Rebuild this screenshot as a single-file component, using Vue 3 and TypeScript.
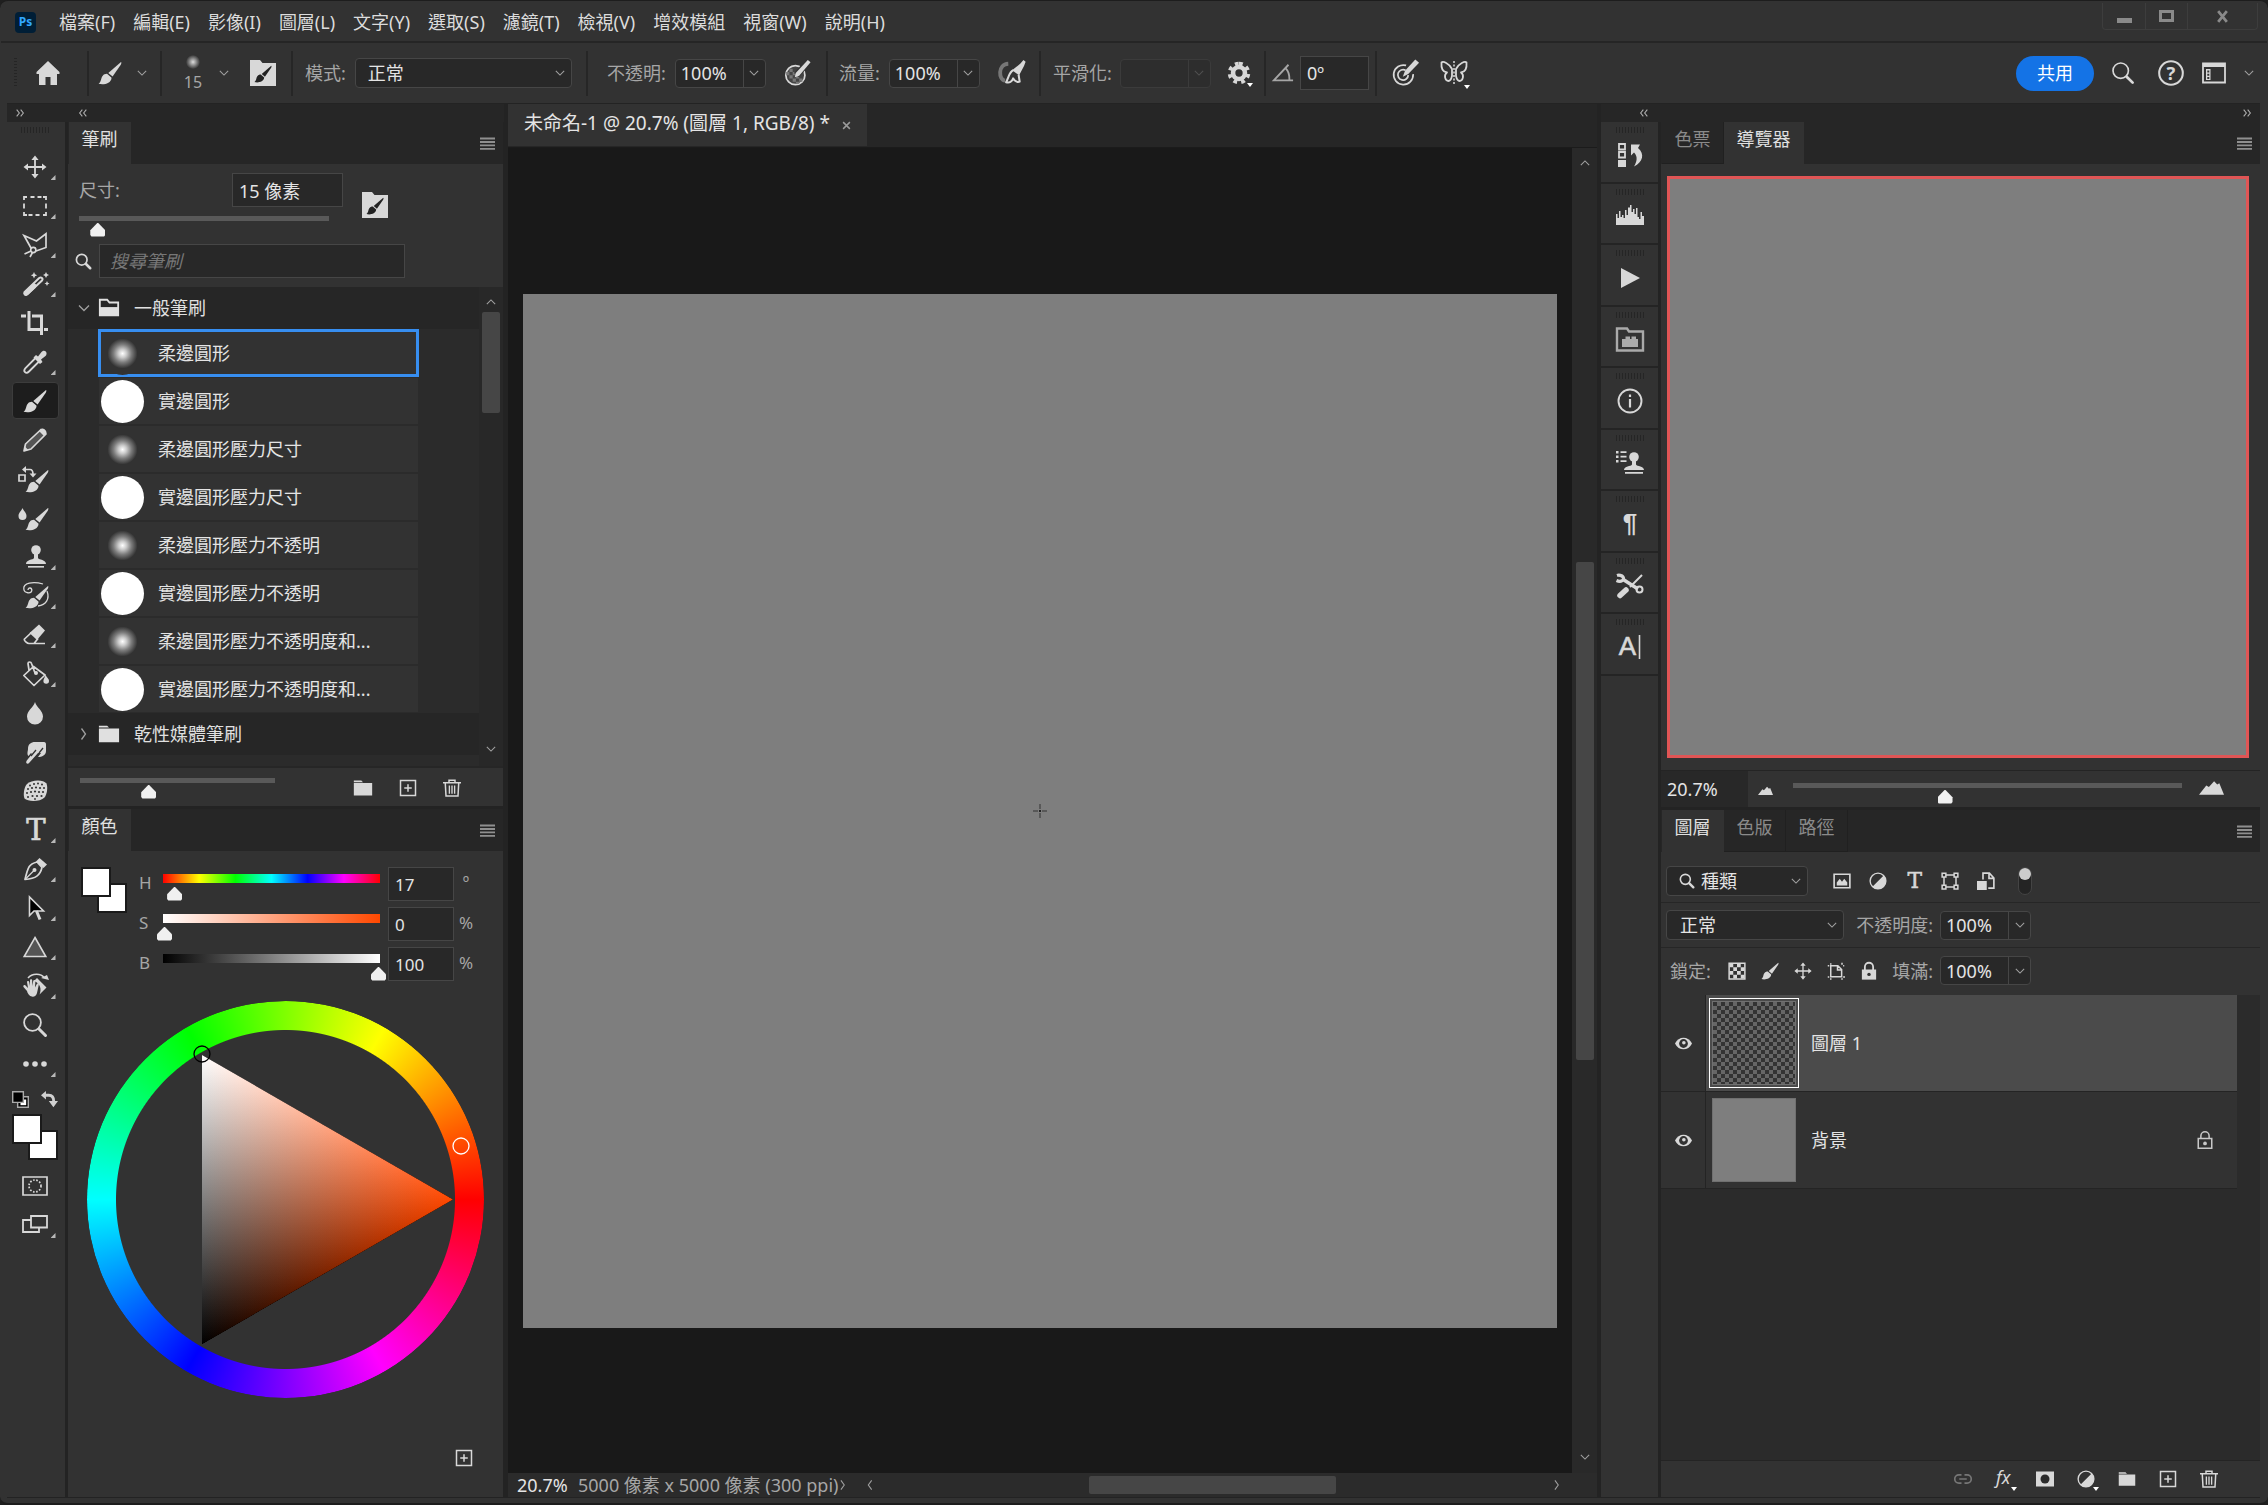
<script setup lang="ts">
import { reactive, ref } from 'vue'

interface Tool {
  name: string
  icon: string
  more?: boolean
}

const brushShape =
  '<path fill="currentColor" d="M23 1c.8.5.3 1.9-.6 3.300L14.600 15.500 10.300 12Z"/><path fill="currentColor" d="M9 12.800c-4 0-5.200 3-6 6-.5 1.900-1.300 3.200-2.400 4 4.600 1.300 12.400.2 13-6Z"/>'

const icons: Record<string, string> = {
  brush: brushShape,
  move: '<path fill="none" stroke="currentColor" stroke-width="1.800" d="M12 3v18M3 12h18"/><path fill="currentColor" d="M12 .5l3.600 4.500H8.400zM12 23.500l3.600-4.500H8.400zM.5 12l4.500-3.600v7.200zM23.500 12l-4.500-3.600v7.200z"/>',
  marquee: '<path fill="none" stroke="currentColor" stroke-width="1.800" d="M1 6V3h3M7.500 3h4M14.500 3h4M20 3h3v3M23 9.500v5M23 18v3h-3M16.500 21h-4M9.500 21h-4M4 21H1v-3M1 14.500v-5"/>',
  lasso: '<path fill="none" stroke="currentColor" stroke-width="1.700" d="M8 15L1 2.500l12.500 5.500L23 .8v13.700l-10 3.500"/><circle cx="10.300" cy="17" r="2.600" fill="none" stroke="currentColor" stroke-width="1.600"/><path fill="none" stroke="currentColor" stroke-width="1.700" d="M8 18l-6.500 3M9.500 19.500L7 24"/>',
  wand: '<path fill="none" stroke="currentColor" stroke-width="2" d="M4 22.500L19 8.500c1.500-2-.8-4-2.800-2.500L1.500 20c-1 2 .8 3.600 2.500 2.500Z"/><path stroke="currentColor" stroke-width="5" stroke-linecap="round" d="M3.500 21L11 14"/><path fill="currentColor" d="M11 0l1 2.200 2.200 1-2.200 1-1 2.200-1-2.200-2.200-1 2.200-1zM23 0l1 2 2 1-2 1-1 2-1-2-2-1 2-1zM24 9l.8 1.700 1.700.8-1.700.8-.8 1.700-.8-1.700-1.700-.8 1.700-.8z"/>',
  crop: '<path fill="none" stroke="currentColor" stroke-width="3" d="M6 0v18.500h12M9 5h9.500v19"/><path stroke="currentColor" stroke-width="3" d="M-2 5h5M21 18.500h4"/>',
  eyedropper: '<path fill="none" stroke="currentColor" stroke-width="1.800" d="M13 7.500L2.500 18c-3 3.500.5 6.500 3.500 3.500L16.500 11"/><path fill="currentColor" d="M10.500 7.500L13 5l2 1.500L18.500 2c3-3.500 7 .5 4 4L18 9.500 19.500 12 17 14z"/>',
  pencil: '<path fill="#555" stroke="currentColor" stroke-width="1.700" stroke-linejoin="round" d="M18 1.500L2.500 16 1 23l7-2L23 6z"/><path fill="currentColor" d="M16 3l3-2.500c2-.8 5 2.500 4.500 4.500L21 8zM1 23l.8-4.500 3.500 3.500z"/>',
  colorReplace: '<g transform="translate(2 2)">' + brushShape + '</g><path fill="none" stroke="currentColor" stroke-width="1.700" d="M-4 8h6v6h-6zM2 2.500h5c2 0 3 1 3 5"/><path fill="currentColor" d="M3-1v7L-1 2.500zM6.500 6.500h7L10 10.500z"/>',
  mixer: '<g transform="translate(2 1)">' + brushShape + '</g><path fill="currentColor" d="M-.500 2c1 3 4 4.500 4 8a4 4 0 0 1-8 0c0-3.500 3-5 4-8z"/>',
  stamp: '<circle cx="13" cy="5" r="4.800" fill="currentColor"/><path fill="currentColor" d="M11 8h4v5c1 2 8 1.500 8 6H3c0-4.500 7-4 8-6z"/><path stroke="currentColor" stroke-width="1.600" d="M5 21.800h16"/>',
  history: '<g transform="translate(2 1)">' + brushShape + '</g><path fill="none" stroke="currentColor" stroke-width="1.300" d="M20 0C10-3 0-1 .8 5c.5 4.500 7.500 5 8 1.500C9 3.500 5 3 5 6M24 7c3 8-1 14-9 15"/>',
  eraser: '<path fill="currentColor" d="M16 1.500l6 6-8 9.500L6.500 10z"/><path fill="none" stroke="currentColor" stroke-width="1.700" stroke-linejoin="round" d="M8.500 9.500L1.500 16c-1 1.500 3 4.500 4.500 4.500h5l4-5M11 20.500h11"/>',
  bucket: '<path fill="none" stroke="currentColor" stroke-width="1.700" stroke-linejoin="round" d="M10.500 4.500L22 13 11 23.500.8 13.500zM6 8L5 1.500c0-2 3-2 3.500 0L12 11"/><circle cx="13" cy="11" r="2" fill="currentColor"/><path fill="currentColor" d="M22.500 12.500c1 3 3.500 4 3.500 6.500a2.800 2.800 0 0 1-5.600 0c0-2 1.500-3 2.100-6.500z"/>',
  blur: '<path fill="currentColor" d="M12 1c1.500 5.500 8 8.500 8 14.500a8 8 0 0 1-16 0C4 9.500 10.500 6.500 12 1z"/>',
  smudge: '<path fill="currentColor" d="M5 9c0-5 3-7 7-7h9c1.500 0 2 1 2 2.500V11c0 4-4 6-8 6l3-4-3 0-8.500 9.500c-2 2.500-4.500.5-2.700-2L9 14l-1-1-2.500 3C3.500 14 5 11 5 9z"/><path stroke="#323232" stroke-width="1.300" fill="none" d="M20 8l-4 5M13 10l-5 6"/>',
  sponge: '<path fill="currentColor" d="M4 5C8 1 20 0 23.500 4.500c1.500 4 .5 11-2 14C17 23 5 23 1.500 19.500 0 16 1 8 4 5z"/><g fill="#323232"><circle cx="7" cy="6.500" r="1"/><circle cx="11" cy="5" r="1"/><circle cx="15" cy="4.500" r="1"/><circle cx="19" cy="5.500" r="1"/><circle cx="5" cy="10" r="1"/><circle cx="9" cy="9" r="1.100"/><circle cx="13" cy="8.500" r="1.100"/><circle cx="17" cy="9" r="1.100"/><circle cx="21" cy="9" r="1"/><circle cx="4" cy="14" r="1"/><circle cx="8" cy="13" r="1.100"/><circle cx="12" cy="12.500" r="1.100"/><circle cx="16" cy="13" r="1.100"/><circle cx="20" cy="13" r="1.100"/><circle cx="5" cy="18" r="1"/><circle cx="9.500" cy="17" r="1.100"/><circle cx="14" cy="17" r="1.100"/><circle cx="18.500" cy="17" r="1.100"/><circle cx="12" cy="20" r=".9"/></g>',
  type: '<text x="13" y="21.500" text-anchor="middle" font-family="DejaVu Serif" font-size="29" fill="currentColor" stroke="currentColor" stroke-width=".7">T</text>',
  pen: '<path fill="none" stroke="currentColor" stroke-width="1.700" stroke-linejoin="round" d="M14 5C6 7 5 10 2 22.500c11-1 15-4 17-12z"/><path fill="currentColor" d="M13 4.500L16.500 1 24 7.500 20.500 11z"/><circle cx="11.500" cy="13" r="2" fill="currentColor"/><path stroke="currentColor" stroke-width="1.300" d="M2 22.500l9-9"/>',
  path: '<path fill="#000" stroke="currentColor" stroke-width="1.600" d="M6.500 1v18.500l4.500-4.500h9.500z"/><path stroke="currentColor" stroke-width="3" d="M13.500 15l3.500 8.500"/>',
  shape: '<path fill="#555" stroke="currentColor" stroke-width="1.600" d="M12 2.500L22.800 21.500H1.200z"/>',
  rotate: '<path fill="none" stroke="currentColor" stroke-width="1.500" d="M5 4C9-1 18-1 21 3.500"/><path fill="currentColor" d="M18 4l6-3 2 5zM14 4l9.500 9.500-7 7C19 15 17 9 11 7z"/><path fill="currentColor" d="M4 17l-3.500-4c-.8-1.500 1-2.500 2-1.500L5 14 4 8c0-1.500 2-1.500 2.200 0L7 12V6.500c0-1.600 2.200-1.600 2.200 0V12l1-5c.3-1.500 2.300-1 2.200.3L12 13.500l1.800-3.500c.8-1.300 2.400-.5 2 .8L14 19c-1 5-8 5.500-10-2z"/>',
  zoom: '<circle cx="9.500" cy="9.500" r="8.400" fill="none" stroke="currentColor" stroke-width="1.800"/><path stroke="currentColor" stroke-width="3" stroke-linecap="round" d="M16 16l6.500 6.500"/>',
  dots: '<g fill="currentColor"><circle cx="3" cy="12" r="2.800"/><circle cx="12" cy="12" r="2.800"/><circle cx="21" cy="12" r="2.800"/></g>',
  home: '<path fill="currentColor" d="M12 0L.5 11v2H3v11h6.500v-8h5v8H21V13h2.500v-2z"/>',
  brushFolder: '<path fill="currentColor" d="M0 0h10l2.500 3H26v23H0z"/><g fill="#222" color="#222" transform="translate(4 5) scale(.75)">' + brushShape + '</g>',
  search: '<circle cx="9.500" cy="9.500" r="7.500" fill="none" stroke="currentColor" stroke-width="2.400"/><path stroke="currentColor" stroke-width="3.600" stroke-linecap="round" d="M15.500 15.500l6 6"/>',
  folder: '<path fill="currentColor" d="M1 3h9l2 2H1zM1 6h22v15H1z"/>',
  folderOpen: '<path fill="none" stroke="currentColor" stroke-width="2" d="M2 20V3h8l2.500 3H22v14z"/><path fill="currentColor" d="M2 11h20v9H2z"/>',
  plus: '<path fill="none" stroke="currentColor" stroke-width="2" d="M2 2h20v20H2zM12 7v10M7 12h10"/>',
  trash: '<path fill="none" stroke="currentColor" stroke-width="2" d="M0 5h24M8 4V1.500h8V4M3 5l1 17.500h16L21 5"/><path stroke="currentColor" stroke-width="1.800" d="M8.500 8.500v11M12 8.500v11M15.500 8.500v11"/>',
  opacityPen: '<circle cx="10.500" cy="14" r="8.800" fill="#444" stroke="currentColor" stroke-width="1.600"/><path fill="#777" d="M5 8h3v3H5zM8 11h3v3H8zM5 14h3v3H5zM2 11h3v3H2zM8 17h3v3H8zM11 14h3v3h-3zM14 17h3v3h-3zM11 20h3v2h-3z"/><path stroke="#323232" stroke-width="6" d="M11.500 14L23 1"/><path fill="currentColor" d="M22 0l2.500 2L14 14.500 10 16l.8-4z"/>',
  airbrush: '<path fill="none" stroke="#777" stroke-width="3.600" d="M9.500 3.500C-.5 4 .5 18.500 6.500 19"/><path fill="none" stroke="currentColor" stroke-width="1.900" stroke-linejoin="round" d="M14 9.500c-3.500 1.500-4 6-6.500 11 3 1 5.500-.5 6.500-3.500 1.500 2.500 4 4 6 3l-1-6.500"/><path fill="currentColor" d="M20.500 3.500L23.500 0 25.500 1.500 24 5.500 19.500 14 13 9.500z"/>',
  gear: '<path fill="none" stroke="currentColor" stroke-width="4.600" stroke-dasharray="4 4.250" d="M12 2a10 10 0 1 1-.01 0"/><circle cx="12" cy="12" r="6.500" fill="none" stroke="currentColor" stroke-width="5"/>',
  angle: '<path fill="none" stroke="currentColor" stroke-width="2" d="M18 3L2 20h21M15 7c3 3 4 7 4 12"/>',
  target: '<path fill="none" stroke="currentColor" stroke-width="1.600" d="M13 5A9 9 0 1 0 19.500 13M12.500 9.500A4.800 4.800 0 1 0 15 14"/><path fill="currentColor" d="M21.500-.500L25 2.500 15 13l-5 2.500L12 10z"/>',
  butterfly: '<path fill="none" stroke="currentColor" stroke-width="1.800" stroke-linejoin="round" d="M11 9C8 3 2 1 .5 2.500 0 8 2 12 6 12.500 2.500 15 4 21 7.500 21c2 0 3-3 3.500-5zM15 9c3-6 9-8 10.500-6.500C26 8 24 12 20 12.500c3.500 2.500 2 8.500-1.500 8.500-2 0-3-3-3.500-5z"/><path stroke="currentColor" stroke-width="1.500" stroke-dasharray="2 1.500" d="M13 1v23"/>',
  help: '<circle cx="12" cy="12" r="10.900" fill="none" stroke="currentColor" stroke-width="1.900"/><text x="12" y="18" text-anchor="middle" font-family="Noto Sans" font-weight="700" font-size="17" fill="currentColor">?</text>',
  workspace: '<path fill="none" stroke="currentColor" stroke-width="1.800" d="M1 2.500h22v19H1z"/><path fill="currentColor" d="M1 2h22v4H1zM4 8h4.500v11H4z"/><path fill="#323232" d="M5.300 9.500h2v2h-2zM5.300 12.700h2v2h-2zM5.300 16h2v2h-2z"/>',
  quickMask: '<path fill="none" stroke="currentColor" stroke-width="1.700" d="M0 3h24v18H0z"/><circle cx="12" cy="12" r="6" fill="none" stroke="currentColor" stroke-width="1.700" stroke-dasharray="1.600 1.600"/>',
  screenMode: '<path fill="none" stroke="currentColor" stroke-width="1.800" d="M8 3h16v11.500H8zM8 7H0v12h16v-4.500"/>',
  historyPanel: '<path fill="none" stroke="currentColor" stroke-width="1.800" d="M1 1h6v5.500H1zM1 9h6v5.500H1z"/><path fill="currentColor" d="M0 17h8v7H0zM13 1.500h9l-2 3.500c7 6 5 14-4 18.500 3-5 4-10 0-14l-3 3z"/>',
  histogram: '<path fill="currentColor" d="M-2 20V9h1.500v4H1V6h1.500v6H4v-2h1.500v3H7V5h1.500v5H10V2.500h2V0h1.500v7H15V4h1.500v5H18V3h1.500v9H21v2h1.500V7H24v4h2v9z"/>',
  play: '<path fill="currentColor" d="M3 2l19 10L3 22z"/>',
  libraries: '<path fill="none" stroke="#aaa" stroke-width="2.400" d="M-1 .5h10l2 3h14v19H-1z"/><path fill="#aaa" d="M4 19v-8h3.500V8.500H12V11h1.500V8.500H18V11h2v8z"/>',
  info: '<circle cx="12" cy="12" r="11.500" fill="none" stroke="currentColor" stroke-width="1.900"/><path stroke="currentColor" stroke-width="2.200" d="M12 10v8.500M12 5.500v2.500"/>',
  clonePanel: '<circle cx="16" cy="6" r="4.800" fill="currentColor"/><path fill="currentColor" d="M14 8h4v5.500c1 2 8 1.500 8 5.500H6c0-4 7-3.500 8-5.500zM-2 0h2.500v2.500H-2zM-2 4.500h2.500V7H-2zM-2 9h2.500v2.500H-2z"/><path stroke="currentColor" stroke-width="1.700" d="M2.500 1.200h6M2.500 5.700h6M2.500 10.200h6M7 21.800h18"/>',
  paragraph: '<text x="12" y="20" text-anchor="middle" font-family="Liberation Sans" font-weight="700" font-size="26" fill="currentColor">¶</text>',
  tools: '<path stroke="currentColor" stroke-width="2" d="M12 13L24 1"/><path stroke="currentColor" stroke-width="5.500" stroke-linecap="round" d="M2 21.500l6-5.500"/><path stroke="currentColor" stroke-width="3.500" d="M6 6l14 9"/><path fill="none" stroke="currentColor" stroke-width="3.200" d="M-1.500 6.500C3 8.500 7 6 5 3 4 1.500 1 .8-1 1.500"/><circle cx="21.500" cy="15.500" r="3" fill="none" stroke="currentColor" stroke-width="2"/>',
  character: '<text x="9.500" y="20" text-anchor="middle" font-family="Liberation Sans" font-size="26" fill="currentColor" stroke="currentColor" stroke-width=".6">A</text><path stroke="currentColor" stroke-width="1.600" d="M21.500 0v24"/>',
  mountains: '<path fill="currentColor" d="M0 19L7 10l2.500 1.500L14.500 6l3 3 2-1L24 19z"/>',
  image: '<path fill="none" stroke="currentColor" stroke-width="2.200" d="M1.500 3h21v18h-21z"/><path fill="currentColor" d="M5 18v-4l4-5 3 4 3-4 4 5v4z"/>',
  adjust: '<circle cx="12" cy="12" r="10.500" fill="none" stroke="currentColor" stroke-width="1.800"/><path fill="currentColor" d="M19.500 4.500A10.600 10.600 0 0 1 4.500 19.500z"/>',
  bounds: '<path fill="none" stroke="currentColor" stroke-width="2" d="M4 6v12M20 6v12M6 4h12M6 20h12M1.500 1.500h5v5h-5zM17.500 1.500h5v5h-5zM1.500 17.500h5v5h-5zM17.500 17.500h5v5h-5z"/>',
  smart: '<path fill="none" stroke="currentColor" stroke-width="2.200" d="M8 10V1.500h8.500L22.500 8v13.500H15M16 2v6.500h6"/><path fill="currentColor" d="M0 12h13v12H0z"/>',
  checker: '<path fill="none" stroke="currentColor" stroke-width="2" d="M1.500 1.500h21v21h-21z"/><path fill="currentColor" d="M2 2h5v5H2zM12 2h5v5h-5zM7 7h5v5H7zM17 7h5v5h-5zM2 12h5v5H2zM12 12h5v5h-5zM7 17h5v5H7zM17 17h5v5h-5z"/>',
  artboard: '<path fill="none" stroke="currentColor" stroke-width="2" d="M5 5h9.500l5 5v9.500H5zM14 5v5.500h5.500M5 1.500v2M1 5h2M21.500 5H23M20 1v2.500M1 20h2M5 21.500v2M20 21.500v2M21.500 20H24"/>',
  lockSolid: '<path fill="none" stroke="currentColor" stroke-width="2.400" d="M6.500 11V6.500a5.500 5.500 0 0 1 11 0V11"/><path fill="currentColor" d="M2.500 10h19v13.500h-19z"/><circle cx="12" cy="16.500" r="2.300" fill="#323232"/>',
  lock: '<path fill="none" stroke="currentColor" stroke-width="2" d="M6.500 10V6.500a5.500 5.500 0 0 1 11 0V10M3 10h18v13H3z"/><circle cx="12" cy="16.500" r="2.500" fill="currentColor"/>',
  eye: '<path fill="currentColor" d="M0 12C5 1 19 1 24 12 19 23 5 23 0 12z"/><circle cx="12" cy="12" r="6.200" fill="#323232"/><circle cx="12.500" cy="11" r="2.500" fill="currentColor"/>',
  link: '<path fill="none" stroke="currentColor" stroke-width="2.200" d="M10 6.500H6.500a5.500 5.500 0 0 0 0 11H10M14 6.500h3.500a5.500 5.500 0 0 1 0 11H14M7 12h10"/>',
  fx: '<text x="11" y="19" text-anchor="middle" font-family="Noto Sans" font-style="italic" font-size="24" fill="currentColor">fx</text>',
  mask: '<path fill="currentColor" d="M0 2h24v20H0z"/><circle cx="12" cy="12" r="6" fill="#2b2b2b"/>',
  down: '<path fill="none" stroke="currentColor" stroke-width="2.600" d="M2 7l10 10L22 7"/>',
  up: '<path fill="none" stroke="currentColor" stroke-width="2.600" d="M2 17L12 7l10 10"/>',
  right: '<path fill="none" stroke="currentColor" stroke-width="2.600" d="M7 1l8 11-8 11"/>',
  left: '<path fill="none" stroke="currentColor" stroke-width="2.600" d="M16 1L8 12l8 11"/>',
  collapse: '<path fill="none" stroke="currentColor" stroke-width="3.200" d="M10 2L2 12l8 10M22 2l-8 10 8 10"/>',
  expand: '<path fill="none" stroke="currentColor" stroke-width="3.200" d="M2 2l8 10-8 10M14 2l8 10-8 10"/>',
  menu: '<path stroke="currentColor" stroke-width="3" d="M0 4h24M0 9.500h24M0 15h24M0 20.500h24"/>',
  swap: '<path fill="none" stroke="currentColor" stroke-width="4" d="M6 6h5c5 0 7 3 7 9"/><path fill="currentColor" d="M7 0v12L0 6zM11 14h13l-6.500 9z"/>',
  defaults: '<path fill="#000" stroke="#aaa" stroke-width="2" d="M8 8h15v15H8z"/><path fill="#fff" d="M12 12h8v8h-8z"/><path fill="#000" stroke="#aaa" stroke-width="2" d="M1 1h15v15H1z"/>',
}

const menus = ['檔案(F)', '編輯(E)', '影像(I)', '圖層(L)', '文字(Y)', '選取(S)', '濾鏡(T)', '檢視(V)', '增效模組', '視窗(W)', '說明(H)']

const tools: Tool[] = [
  { name: '移動', icon: 'move', more: true },
  { name: '矩形選取畫面', icon: 'marquee', more: true },
  { name: '多邊形套索', icon: 'lasso', more: true },
  { name: '魔術棒', icon: 'wand', more: true },
  { name: '裁切', icon: 'crop' },
  { name: '滴管', icon: 'eyedropper', more: true },
  { name: '筆刷', icon: 'brush' },
  { name: '鉛筆', icon: 'pencil' },
  { name: '顏色取代', icon: 'colorReplace' },
  { name: '混合器筆刷', icon: 'mixer' },
  { name: '仿製印章', icon: 'stamp', more: true },
  { name: '步驟記錄筆刷', icon: 'history', more: true },
  { name: '橡皮擦', icon: 'eraser', more: true },
  { name: '油漆桶', icon: 'bucket', more: true },
  { name: '模糊', icon: 'blur' },
  { name: '指尖', icon: 'smudge' },
  { name: '海綿', icon: 'sponge' },
  { name: '水平文字', icon: 'type', more: true },
  { name: '筆型', icon: 'pen', more: true },
  { name: '路徑選取', icon: 'path', more: true },
  { name: '三角形', icon: 'shape', more: true },
  { name: '旋轉檢視', icon: 'rotate', more: true },
  { name: '縮放顯示', icon: 'zoom' },
  { name: '編輯工具列', icon: 'dots', more: true },
]
const activeTool = ref('筆刷')

const brushes = [
  { name: '柔邊圓形', soft: true },
  { name: '實邊圓形', soft: false },
  { name: '柔邊圓形壓力尺寸', soft: true },
  { name: '實邊圓形壓力尺寸', soft: false },
  { name: '柔邊圓形壓力不透明', soft: true },
  { name: '實邊圓形壓力不透明', soft: false },
  { name: '柔邊圓形壓力不透明度和...', soft: true },
  { name: '實邊圓形壓力不透明度和...', soft: false },
]
const activeBrush = ref(0)

const channels = reactive([
  { id: 'H', value: 17, max: 360, unit: 'º' },
  { id: 'S', value: 0, max: 100, unit: '%' },
  { id: 'B', value: 100, max: 100, unit: '%' },
])

const dockIcons = ['historyPanel', 'histogram', 'play', 'libraries', 'info', 'clonePanel', 'paragraph', 'tools', 'character']
const filterIcons = ['image', 'adjust', 'type', 'bounds', 'smart']
const lockIcons = ['checker', 'brush', 'move', 'artboard', 'lockSolid']
const layers = [
  { name: '圖層 1', active: true, locked: false },
  { name: '背景', active: false, locked: true },
]
const layerActions = [
  { icon: 'link', more: false },
  { icon: 'fx', more: true },
  { icon: 'mask', more: false },
  { icon: 'adjust', more: true },
  { icon: 'folder', more: false },
  { icon: 'plus', more: false },
  { icon: 'trash', more: false },
]
</script>

<template>
  <div class="app">
    <header class="titlebar">
      <span class="logo">Ps</span>
      <nav class="menus">
        <button v-for="m in menus" :key="m">{{ m }}</button>
      </nav>
      <div class="winctl">
        <button aria-label="最小化"><i class="min"></i></button>
        <button aria-label="最大化"><i class="max"></i></button>
        <button class="close" aria-label="關閉"><svg viewBox="0 0 24 24"><path stroke="currentColor" stroke-width="5" d="M4 2l16 20M20 2L4 22" /></svg></button>
      </div>
    </header>

    <div class="options">
      <div class="group g-home">
        <i class="vgrip"></i>
        <button aria-label="首頁"><svg class="i24" viewBox="0 0 24 24" v-html="icons.home" /></button>
      </div>
      <div class="group g-tool">
        <button aria-label="筆刷工具"><svg class="i24" viewBox="0 0 24 24" v-html="icons.brush" /></button>
        <svg class="chev" viewBox="0 0 24 24" v-html="icons.down" />
      </div>
      <div class="group g-preset">
        <button class="preset" aria-label="筆刷預設"><i class="dot"></i><span>15</span></button>
        <svg class="chev" viewBox="0 0 24 24" v-html="icons.down" />
        <button aria-label="筆刷設定"><svg class="i26" viewBox="0 0 26 26" v-html="icons.brushFolder" /></button>
      </div>
      <div class="group g-mode">
        <label for="mode">模式:</label>
        <span class="select">
          <select id="mode"><option>正常</option></select>
          <svg class="chev" viewBox="0 0 24 24" v-html="icons.down" />
        </span>
      </div>
      <div class="group g-opacity">
        <label for="opacity">不透明:</label>
        <span class="combo"><input id="opacity" value="100%" /><button aria-label="不透明選項"><svg class="chev" viewBox="0 0 24 24" v-html="icons.down" /></button></span>
        <button class="last" aria-label="不透明壓力"><svg class="i26" viewBox="0 0 24 24" v-html="icons.opacityPen" /></button>
      </div>
      <div class="group g-flow">
        <label for="flow">流量:</label>
        <span class="combo"><input id="flow" value="100%" /><button aria-label="流量選項"><svg class="chev" viewBox="0 0 24 24" v-html="icons.down" /></button></span>
        <button class="last" aria-label="噴槍"><svg class="i26" viewBox="0 0 24 24" v-html="icons.airbrush" /></button>
      </div>
      <div class="group g-smooth">
        <label for="smooth">平滑化:</label>
        <span class="combo off"><input id="smooth" disabled /><button aria-label="平滑選項"><svg class="chev" viewBox="0 0 24 24" v-html="icons.down" /></button></span>
        <button class="last drop" aria-label="平滑設定"><svg class="i22" viewBox="0 0 24 24" v-html="icons.gear" /></button>
      </div>
      <div class="group g-angle">
        <label for="angle" aria-label="角度"><svg class="i22" viewBox="0 0 24 24" v-html="icons.angle" /></label>
        <input id="angle" class="box" value="0º" />
      </div>
      <div class="group g-extra">
        <button aria-label="尺寸壓力"><svg class="i26" viewBox="0 0 24 24" v-html="icons.target" /></button>
        <button class="drop" aria-label="對稱"><svg class="i26" viewBox="0 0 26 26" v-html="icons.butterfly" /></button>
      </div>
      <div class="actions">
        <button class="share">共用</button>
        <button class="seek" aria-label="搜尋"><svg class="i22" viewBox="0 0 24 24" v-html="icons.zoom" /></button>
        <button aria-label="說明"><svg class="i26" viewBox="0 0 24 24" v-html="icons.help" /></button>
        <button aria-label="工作區"><svg class="i24" viewBox="0 0 24 24" v-html="icons.workspace" /></button>
        <svg class="chev" viewBox="0 0 24 24" v-html="icons.down" />
      </div>
    </div>

    <main class="workspace">
      <section class="dock left">
        <div class="dockhead">
          <svg viewBox="0 0 24 24" v-html="icons.expand" />
          <svg viewBox="0 0 24 24" v-html="icons.collapse" />
        </div>
        <div class="dockbody">
          <aside class="toolbar">
            <i class="grip"></i>
            <button v-for="t in tools" :key="t.name" class="tool" :class="{ on: t.name === activeTool, more: t.more }" :aria-label="t.name" @click="activeTool = t.name">
              <svg viewBox="0 0 24 24" v-html="icons[t.icon]" />
            </button>
            <div class="minis">
              <svg viewBox="0 0 24 24" v-html="icons.defaults" />
              <svg viewBox="0 0 24 24" v-html="icons.swap" />
            </div>
            <div class="swatches"><i class="bg"></i><i class="fg"></i></div>
            <button class="tool" aria-label="快速遮色片"><svg viewBox="0 0 24 24" v-html="icons.quickMask" /></button>
            <button class="tool more" aria-label="螢幕模式"><svg viewBox="0 0 24 24" v-html="icons.screenMode" /></button>
          </aside>

          <div class="panels">
            <section class="panel">
              <div class="tabs">
                <button class="tab on">筆刷</button>
                <svg class="burger" viewBox="0 0 24 24" v-html="icons.menu" />
              </div>
              <div class="brushctl">
                <div class="sizebox">
                  <div class="sizerow">
                    <label for="size">尺寸:</label>
                    <input id="size" class="box" value="15 像素" />
                  </div>
                  <div class="slider"><i class="track"></i><input type="range" aria-label="尺寸" min="0" max="100" value="7" /></div>
                </div>
                <button aria-label="筆刷設定"><svg class="i26" viewBox="0 0 26 26" v-html="icons.brushFolder" /></button>
              </div>
              <div class="find">
                <label for="find" aria-label="搜尋"><svg viewBox="0 0 24 24" v-html="icons.search" /></label>
                <input id="find" class="box" placeholder="搜尋筆刷" />
              </div>
              <div class="listwrap">
                <div class="list">
                  <button class="folder">
                    <svg class="tw" viewBox="0 0 24 24" v-html="icons.down" />
                    <svg class="fi" viewBox="0 0 24 24" v-html="icons.folderOpen" />一般筆刷
                  </button>
                  <ul>
                    <li v-for="(b, i) in brushes" :key="b.name" :class="{ on: i === activeBrush }" @click="activeBrush = i">
                      <i :class="b.soft ? 'soft' : 'hard'"></i><span>{{ b.name }}</span>
                    </li>
                  </ul>
                  <button class="folder">
                    <svg class="tw" viewBox="0 0 24 24" v-html="icons.right" />
                    <svg class="fi" viewBox="0 0 24 24" v-html="icons.folder" />乾性媒體筆刷
                  </button>
                </div>
                <div class="vscroll">
                  <svg class="chev" viewBox="0 0 24 24" v-html="icons.up" />
                  <i class="bar"></i>
                  <svg class="chev end" viewBox="0 0 24 24" v-html="icons.down" />
                </div>
              </div>
              <footer class="brushfoot">
                <div class="slider"><i class="track"></i><input type="range" aria-label="預視尺寸" min="0" max="100" value="35" /></div>
                <div class="tri">
                  <button aria-label="新增群組"><svg class="i20" viewBox="0 0 24 24" v-html="icons.folder" /></button>
                  <button aria-label="新增筆刷"><svg class="i18" viewBox="0 0 24 24" v-html="icons.plus" /></button>
                  <button aria-label="刪除"><svg class="i18" viewBox="0 0 24 24" v-html="icons.trash" /></button>
                </div>
              </footer>
            </section>

            <section class="panel color">
              <div class="tabs">
                <button class="tab on">顏色</button>
                <svg class="burger" viewBox="0 0 24 24" v-html="icons.menu" />
              </div>
              <div class="hsb">
                <div class="swatches"><i class="bg"></i><i class="fg"></i></div>
                <div class="rows">
                  <div v-for="c in channels" :key="c.id" class="row">
                    <label :for="'c' + c.id">{{ c.id }}</label>
                    <div class="slider">
                      <i class="track" :class="'t' + c.id"></i>
                      <input v-model.number="c.value" type="range" :aria-label="c.id" min="0" :max="c.max" />
                    </div>
                    <input :id="'c' + c.id" v-model="c.value" class="box" />
                    <span>{{ c.unit }}</span>
                  </div>
                </div>
              </div>
              <div class="wheel">
                <div class="ring"></div>
                <svg viewBox="0 0 397 397">
                  <defs>
                    <linearGradient id="tone" gradientUnits="userSpaceOnUse" x1="115" y1="54" x2="240" y2="271">
                      <stop offset="0" stop-color="#fff" /><stop offset="1" stop-color="#000" />
                    </linearGradient>
                    <linearGradient id="hue" gradientUnits="userSpaceOnUse" x1="366" y1="198" x2="115" y2="198">
                      <stop offset="0" stop-color="#ff4800" /><stop offset="1" stop-color="#000" />
                    </linearGradient>
                  </defs>
                  <g class="iso">
                    <path fill="url(#tone)" d="M115 54L366 198.500 115 343z" />
                    <path class="add" fill="url(#hue)" d="M115 54L366 198.500 115 343z" />
                  </g>
                  <circle cx="115" cy="53" r="8" fill="none" stroke="#000" stroke-width="1.300" />
                  <circle cx="374" cy="145" r="8" fill="none" stroke="#fff" stroke-width="1.300" />
                </svg>
              </div>
              <button class="addswatch" aria-label="新增色票"><svg class="i18" viewBox="0 0 24 24" v-html="icons.plus" /></button>
            </section>
          </div>
        </div>
      </section>

      <section class="document">
        <div class="doctabs">
          <div class="doctab">
            <span>未命名-1 @ 20.7% (圖層 1, RGB/8) *</span>
            <button aria-label="關閉文件"><svg viewBox="0 0 24 24"><path stroke="currentColor" stroke-width="4" d="M3 3l18 18M21 3L3 21" /></svg></button>
          </div>
        </div>
        <div class="stage">
          <div class="pasteboard">
            <div class="artboard">
              <svg viewBox="0 0 14 14"><path stroke="#333" fill="none" d="M7 0v5M7 9v5M0 7h5M9 7h5" /><path fill="#222" d="M6 6h2v2H6z" /></svg>
            </div>
          </div>
          <div class="docscroll">
            <svg class="chev" viewBox="0 0 24 24" v-html="icons.up" />
            <i class="bar"></i>
            <svg class="chev end" viewBox="0 0 24 24" v-html="icons.down" />
          </div>
        </div>
        <footer class="status">
          <span class="pct">20.7%</span>
          <span class="dims">5000 像素 x 5000 像素 (300 ppi)</span>
          <svg class="chev lit" viewBox="0 0 24 24" v-html="icons.right" />
          <div class="hscroll">
            <svg class="chev" viewBox="0 0 24 24" v-html="icons.left" />
            <i class="bar"></i>
            <svg class="chev" viewBox="0 0 24 24" v-html="icons.right" />
          </div>
        </footer>
      </section>

      <section class="dock right">
        <div class="dockhead">
          <svg viewBox="0 0 24 24" v-html="icons.collapse" />
          <svg viewBox="0 0 24 24" v-html="icons.expand" />
        </div>
        <div class="dockbody">
          <aside class="iconcol">
            <div class="cells">
              <button v-for="d in dockIcons" :key="d" :aria-label="d">
                <i class="grip"></i>
                <svg viewBox="0 0 24 24" v-html="icons[d]" />
              </button>
            </div>
          </aside>

          <div class="panels">
            <section class="panel">
              <div class="tabs">
                <button class="tab">色票</button>
                <button class="tab on wide">導覽器</button>
                <svg class="burger" viewBox="0 0 24 24" v-html="icons.menu" />
              </div>
              <div class="navbody"><div class="preview"></div></div>
              <footer class="navfoot">
                <input class="zoomval" aria-label="縮放" value="20.7%" />
                <svg class="small" viewBox="0 0 24 24" v-html="icons.mountains" />
                <div class="slider"><i class="track"></i><input type="range" aria-label="縮放" min="0" max="100" value="39" /></div>
                <svg class="big" viewBox="0 0 24 24" v-html="icons.mountains" />
              </footer>
            </section>

            <section class="panel layers">
              <div class="tabs">
                <button class="tab on">圖層</button>
                <button class="tab">色版</button>
                <button class="tab">路徑</button>
                <svg class="burger" viewBox="0 0 24 24" v-html="icons.menu" />
              </div>
              <div class="lrow filter">
                <span class="select kind">
                  <svg class="mag" viewBox="0 0 24 24" v-html="icons.search" />
                  <select aria-label="篩選"><option>種類</option></select>
                  <svg class="chev" viewBox="0 0 24 24" v-html="icons.down" />
                </span>
                <div class="ficons">
                  <button v-for="f in filterIcons" :key="f" :aria-label="f"><svg class="i18" viewBox="0 0 24 24" v-html="icons[f]" /></button>
                </div>
                <button class="toggle" aria-label="篩選開關"><i></i></button>
              </div>
              <div class="lrow">
                <span class="select blend">
                  <select aria-label="混合模式"><option>正常</option></select>
                  <svg class="chev" viewBox="0 0 24 24" v-html="icons.down" />
                </span>
                <label for="lop">不透明度:</label>
                <span class="combo"><input id="lop" value="100%" /><button aria-label="不透明度選項"><svg class="chev" viewBox="0 0 24 24" v-html="icons.down" /></button></span>
              </div>
              <div class="lrow lockrow">
                <span class="lbl">鎖定:</span>
                <div class="licons">
                  <button v-for="l in lockIcons" :key="l" :aria-label="l"><svg class="i20" viewBox="0 0 24 24" v-html="icons[l]" /></button>
                </div>
                <label for="lfill">填滿:</label>
                <span class="combo"><input id="lfill" value="100%" /><button aria-label="填滿選項"><svg class="chev" viewBox="0 0 24 24" v-html="icons.down" /></button></span>
              </div>
              <div class="stack">
                <ul>
                  <li v-for="l in layers" :key="l.name" :class="{ on: l.active }">
                    <button class="vis" aria-label="可見度"><svg viewBox="0 0 24 24" v-html="icons.eye" /></button>
                    <div class="layer">
                      <i class="thumb"><i></i></i>
                      <span>{{ l.name }}</span>
                      <svg v-if="l.locked" class="i18 lk" viewBox="0 0 24 24" v-html="icons.lock" />
                    </div>
                  </li>
                </ul>
              </div>
              <footer class="layerfoot">
                <button v-for="a in layerActions" :key="a.icon" :class="{ drop: a.more, dim: a.icon === 'link' }" :aria-label="a.icon">
                  <svg viewBox="0 0 24 24" v-html="icons[a.icon]" />
                </button>
              </footer>
            </section>
          </div>
        </div>
      </section>
    </main>
  </div>
</template>

<style>
body {
  background: #1f1f1f;
}
</style>

<style scoped>
* {
  box-sizing: border-box;
}
.app {
  display: flex;
  flex-direction: column;
  height: 100vh;
  padding: 2px 1px;
  background: #323232;
  border-top: 1px solid #1d1d1d;
  border-bottom: 2px solid #1d1d1d;
  border-radius: 8px;
  color: #e4e4e4;
  font: 18px/24px 'Noto Sans', 'Noto Sans CJK TC', sans-serif;
  overflow: hidden;
}
button,
input,
select {
  font: inherit;
  color: inherit;
  margin: 0;
  padding: 0;
  border: 0;
  background: none;
  outline: none;
}
button {
  display: flex;
  align-items: center;
  justify-content: center;
  color: #d8d8d8;
}
svg {
  display: block;
  flex: none;
  overflow: visible;
}
i {
  display: block;
  flex: none;
}
ul {
  list-style: none;
  margin: 0;
  padding: 0;
}
label,
.lbl {
  color: #a6a6a6;
  white-space: nowrap;
}
.i18 { width: 18px; height: 18px; }
.i20 { width: 20px; height: 20px; }
.i22 { width: 22px; height: 22px; }
.i24 { width: 24px; height: 24px; }
.i26 { width: 26px; height: 26px; }
.chev {
  width: 10px;
  height: 10px;
  color: #a0a0a0;
}

/* title bar */
.titlebar {
  display: flex;
  align-items: center;
  flex: none;
  height: 40px;
  padding-left: 14px;
  border-bottom: 2px solid #252525;
}
.logo {
  width: 21px;
  height: 21px;
  border-radius: 4px;
  background: #001e36;
  color: #31a8ff;
  font-size: 12px;
  font-weight: 700;
  line-height: 20px;
  text-align: center;
}
.menus {
  display: flex;
  padding-left: 14px;
}
.menus button {
  padding: 0 9px;
  color: #dcdcdc;
}
.winctl {
  display: flex;
  align-self: flex-start;
  height: 27px;
  margin: 0 9px 0 auto;
  border: 1px solid #3d3d3d;
  border-top: 0;
  border-radius: 0 0 4px 4px;
}
.winctl button {
  width: 42px;
  color: #8a8a8a;
}
.winctl button + button {
  border-left: 1px solid #3d3d3d;
}
.winctl .close {
  width: 70px;
}
.close svg {
  width: 15px;
  height: 13px;
}
.min {
  width: 15px;
  height: 5px;
  margin-top: 9px;
  background: #8a8a8a;
}
.max {
  width: 15px;
  height: 12px;
  border: 3px solid #8a8a8a;
}

/* options bar */
.options {
  display: flex;
  align-items: center;
  flex: none;
  height: 60px;
  padding-left: 6px;
}
.group {
  display: flex;
  align-items: center;
  height: 45px;
  border-right: 2px solid #262626;
}
.g-home { width: 82px; padding-left: 7px; gap: 19px; }
.g-tool { width: 73px; padding-left: 9px; gap: 15px; }
.g-preset { width: 131px; padding-left: 21px; }
.g-mode { width: 295px; padding-left: 12px; gap: 9px; }
.g-opacity { width: 240px; padding-left: 19px; gap: 9px; }
.g-flow { width: 213px; padding-left: 11px; gap: 9px; }
.g-smooth { width: 225px; padding-left: 12px; gap: 8px; }
.g-angle { width: 111px; padding-left: 6px; gap: 6px; }
.g-extra { padding-left: 15px; gap: 23px; border: 0; }
.last { margin-left: 9px; }
.vgrip {
  width: 3px;
  height: 30px;
  background: repeating-linear-gradient(#252525 0 1px, transparent 1px 3px);
}
.preset {
  flex-direction: column;
  gap: 3px;
  width: 20px;
  margin-right: 16px;
  color: #a6a6a6;
  font-size: 16px;
  line-height: 20px;
}
.dot {
  width: 14px;
  height: 14px;
  border-radius: 50%;
  background: radial-gradient(#ddd, #323232 72%);
}
.g-preset .chev { margin-right: 21px; }
.select {
  display: flex;
  align-items: center;
  height: 30px;
  padding-right: 6px;
  border: 1px solid #464646;
  border-radius: 4px;
  background: #282828;
}
.select select {
  flex: 1;
  min-width: 0;
  padding-left: 12px;
  appearance: none;
}
.g-mode .select { width: 217px; }
.combo {
  display: flex;
  flex: none;
  width: 91px;
  height: 29px;
  border: 1px solid #464646;
  border-radius: 4px;
  background: #282828;
}
.combo input {
  flex: 1;
  min-width: 0;
  padding-left: 5px;
}
.combo button {
  width: 22px;
  border-left: 1px solid #464646;
}
.off,
.off button { border-color: #3b3b3b; }
.off { background: #2d2d2d; }
.off .chev { color: #505050; }
.box {
  height: 34px;
  padding-left: 6px;
  border: 1px solid #464646;
  background: #282828;
}
.g-angle .box { width: 69px; }
.drop { position: relative; }
.drop::after {
  content: '';
  position: absolute;
  right: -3px;
  bottom: -3px;
  border: 3px solid transparent;
  border-top: 4px solid #fff;
  border-bottom: 0;
}
.actions {
  display: flex;
  align-items: center;
  gap: 18px;
  margin-left: auto;
  padding-right: 13px;
}
.share {
  width: 78px;
  height: 35px;
  border-radius: 18px;
  background: #1473e6;
  color: #fff;
}
.seek { padding-right: 6px; }

/* workspace and docks */
.workspace {
  display: flex;
  flex: 1;
  min-height: 0;
  margin: 0 7px 3px 6px;
  background: #232323;
  gap: 4px;
  border: 1px solid #232323;
  border-left: 0;
  border-right: 0;
}
.dock {
  display: flex;
  flex-direction: column;
}
.dockhead {
  display: flex;
  align-items: center;
  height: 18px;
  background: #262626;
}
.dockhead svg {
  width: 10px;
  height: 8px;
  color: #b0b0b0;
}
.left .dockhead { padding-left: 8px; gap: 53px; }
.right .dockhead { padding: 0 8px 0 38px; justify-content: space-between; }
.dockbody {
  display: flex;
  flex: 1;
  min-height: 0;
  gap: 3px;
}
.left { width: 497px; }
.right { width: 659px; }
.toolbar {
  display: flex;
  flex-direction: column;
  align-items: center;
  width: 58px;
  padding-right: 2px;
  background: #323232;
}
.grip {
  width: 28px;
  height: 6px;
  background: repeating-linear-gradient(90deg, #252525 0 1px, transparent 1px 3px);
}
.toolbar .grip { margin: 5px 0 15px; }
.tool {
  position: relative;
  width: 47px;
  height: 37px;
  margin-bottom: 2px;
  border-radius: 4px;
}
.tool svg {
  width: 24px;
  height: 24px;
}
.tool.on {
  background: #1d1d1d;
  border: 1px solid #3c3c3c;
}
.more::after {
  content: '';
  position: absolute;
  right: 3px;
  bottom: 5px;
  width: 5px;
  height: 5px;
  background: #b8b8b8;
  clip-path: polygon(100% 0, 100% 100%, 0 100%);
}
.minis {
  display: flex;
  gap: 12px;
  margin-top: 7px;
  color: #d0d0d0;
}
.minis svg {
  width: 17px;
  height: 17px;
}
.swatches {
  position: relative;
  width: 46px;
  height: 46px;
}
.swatches i {
  position: absolute;
  width: 30px;
  height: 30px;
  background: #fff;
  border: 2px solid #1a1a1a;
}
.fg { left: 0; top: 0; }
.bg { right: 0; bottom: 0; }
.toolbar .swatches { margin: 6px 0 7px; }

.panels {
  display: flex;
  flex-direction: column;
  flex: 1;
  min-width: 0;
  gap: 3px;
}
.panel {
  display: flex;
  flex-direction: column;
  background: #323232;
}
.left .panels { margin-right: 1px; }
.tabs {
  display: flex;
  height: 42px;
  padding-left: 1px;
  background: #262626;
}
.tab {
  width: 62px;
  padding-bottom: 8px;
  border-right: 1px solid #202020;
  border-bottom: 1px solid #202020;
  color: #8a8a8a;
}
.tab.wide { width: 80px; }
.tab.on {
  background: #323232;
  border-color: #323232;
  color: #e0e0e0;
}
.burger {
  width: 15px;
  height: 15px;
  margin: 14px 8px 0 auto;
  color: #8f8f8f;
}
.slider {
  display: flex;
  flex-direction: column;
}
.track {
  height: 5px;
  background: #595959;
}
.slider input {
  height: 15px;
  margin: 1px -6px 0;
  appearance: none;
}
.slider input::-webkit-slider-thumb {
  appearance: none;
  width: 15px;
  height: 14px;
  background: #f0f0f0;
  clip-path: polygon(50% 0, 100% 55%, 100% 90%, 92% 100%, 8% 100%, 0 90%, 0 55%);
}
.brushctl {
  display: flex;
  align-items: center;
  gap: 33px;
  padding: 9px 0 0 11px;
}
.sizebox { width: 250px; }
.sizerow {
  display: flex;
  justify-content: space-between;
  align-items: center;
  margin: 0 -14px 9px 0;
}
.sizerow .box { width: 111px; }
.find {
  display: flex;
  align-items: center;
  gap: 7px;
  padding: 7px 0 9px 7px;
}
.find svg {
  width: 17px;
  height: 17px;
  color: #d8d8d8;
}
.find .box {
  width: 306px;
  padding-left: 10px;
}
.find .box::placeholder {
  color: #777;
  font-style: italic;
}
.listwrap {
  display: flex;
  height: 481px;
  background: #2b2b2b;
  border-bottom: 2px solid #262626;
}
.list {
  flex: 1;
  background: #2b2b2b;
}
.folder {
  justify-content: flex-start;
  width: 100%;
  height: 42px;
  padding-left: 10px;
  background: #262626;
  color: #e0e0e0;
}
.tw {
  width: 12px;
  height: 12px;
  color: #a0a0a0;
}
.fi {
  width: 24px;
  height: 22px;
  margin: 0 13px 0 7px;
}
.list ul {
  padding-left: 30px;
}
.list li {
  display: flex;
  align-items: center;
  width: 321px;
  height: 48px;
  border: 1px solid #2b2b2b;
  background: #323232;
  white-space: nowrap;
}
.list li.on { border: 3px solid #378ef0; }
.soft,
.hard {
  width: 43px;
  height: 43px;
  margin: 0 14px 0 2px;
  border-radius: 50%;
  background: #fff;
}
.on .soft { margin-left: 0; }
.soft { background: radial-gradient(circle, #fff 0, #ccc 4px, #7c7c7c 9px, #323232 15px); }
.vscroll {
  display: flex;
  flex-direction: column;
  align-items: center;
  width: 24px;
  padding: 10px 0 12px;
  background: #282828;
}
.vscroll .bar {
  width: 18px;
  height: 101px;
  margin-top: 5px;
  border-radius: 2px;
  background: #464646;
}
.end { margin-top: auto; }
.brushfoot {
  display: flex;
  align-items: flex-start;
  justify-content: space-between;
  height: 38px;
  padding: 10px 42px 0 12px;
}
.brushfoot .slider { width: 195px; }
.tri {
  display: flex;
  gap: 26px;
}

/* colour panel */
.color {
  flex: 1;
  min-height: 0;
}
.hsb {
  display: flex;
  padding: 16px 0 20px 13px;
}
.hsb .swatches { margin-right: 12px; }
.rows {
  display: flex;
  flex-direction: column;
  gap: 6px;
}
.row {
  display: flex;
  font-size: 17px;
}
.row label {
  width: 24px;
  padding-top: 4px;
}
.row .slider {
  width: 217px;
  padding-top: 7px;
  margin-right: 8px;
}
.row .track { height: 9px; }
.row .slider input { margin-top: 3px; }
.row .box {
  width: 66px;
  margin-right: 3px;
}
.row span {
  width: 18px;
  padding-top: 4px;
  text-align: center;
  color: #a6a6a6;
}
.tH { background: linear-gradient(90deg, #f00, #ff0, #0f0, #0ff, #00f, #f0f, #f00); }
.tS { background: linear-gradient(90deg, #fff, #ff4800); }
.tB { background: linear-gradient(90deg, #000, #fff); }
.wheel {
  position: relative;
  width: 397px;
  height: 397px;
  margin-left: 19px;
}
.ring {
  height: 100%;
  border-radius: 50%;
  background: conic-gradient(from 90deg, #f00, #f0f, #00f, #0ff, #0f0, #ff0, #f00);
  mask: radial-gradient(circle, transparent 169px, #000 170px);
}
.wheel svg {
  position: absolute;
  inset: 0;
}
.iso { isolation: isolate; }
.add { mix-blend-mode: plus-lighter; }
.addswatch {
  margin: auto 30px 30px auto;
}

/* document */
.document {
  display: flex;
  flex-direction: column;
  flex: 1;
  min-width: 0;
}
.doctabs {
  height: 44px;
  background: #262626;
  border-bottom: 1px solid #1b1b1b;
}
.doctab {
  display: flex;
  align-items: flex-start;
  gap: 12px;
  width: max-content;
  height: 42px;
  padding: 7px 16px 0 16px;
  background: #323232;
  font-size: 19px;
}
.doctab svg {
  width: 9px;
  height: 9px;
  margin-top: 10px;
  color: #9a9a9a;
}
.stage {
  display: flex;
  flex: 1;
  min-height: 0;
}
.pasteboard {
  display: flex;
  align-items: center;
  flex: 1;
  padding: 0 15px;
  background: #191919;
}
.artboard {
  display: grid;
  place-items: center;
  width: 100%;
  aspect-ratio: 1;
  background: #7e7e7e;
}
.artboard svg { width: 14px; height: 14px; }
.docscroll {
  display: flex;
  flex-direction: column;
  align-items: center;
  width: 25px;
  padding: 10px 0 11px;
  background: #292929;
}
.docscroll .bar {
  width: 18px;
  height: 498px;
  margin-top: 394px;
  border-radius: 2px;
  background: #464646;
}
.status {
  display: flex;
  align-items: center;
  height: 24px;
  background: #2b2b2b;
}
.pct {
  width: 70px;
  padding-left: 9px;
}
.dims {
  color: #a6a6a6;
  white-space: nowrap;
}
.lit { margin: 0 14px 0 0; }
.hscroll {
  display: flex;
  align-items: center;
  flex: 1;
  padding: 0 35px 0 3px;
}
.hscroll .bar {
  width: 247px;
  height: 18px;
  margin: 0 auto 0 214px;
  border-radius: 2px;
  background: #464646;
}

/* collapsed icon column */
.iconcol {
  width: 57px;
  background: #323232;
}
.cells {
  display: grid;
  grid-template-rows: repeat(9, 1fr);
  height: 554px;
}
.cells button {
  flex-direction: column;
  justify-content: flex-start;
  border-bottom: 2px solid #242424;
}
.cells .grip { margin: 5px 0 10px; }
.cells svg {
  width: 24px;
  height: 24px;
}

/* navigator */
.navbody { padding: 12px 11px 12px 6px; }
.preview {
  width: 100%;
  aspect-ratio: 1;
  border: 3px solid #e05555;
  background: #7e7e7e;
}
.navfoot {
  display: flex;
  height: 37px;
  border-top: 1px solid #242424;
}
.zoomval {
  width: 87px;
  padding-left: 6px;
  background: #282828;
}
.small {
  width: 15px;
  height: 15px;
  margin: 12px 20px 0 10px;
}
.big {
  width: 25px;
  height: 25px;
  margin: 4px 36px 0 17px;
}
.navfoot svg { color: #d8d8d8; }
.navfoot .slider {
  flex: 1;
  padding-top: 12px;
}

/* layers */
.layers {
  flex: 1;
  min-height: 0;
}
.lrow {
  display: flex;
  align-items: center;
  height: 45px;
  padding-left: 5px;
  border-bottom: 1px solid #262626;
}
.filter {
  height: 51px;
  padding-top: 7px;
}
.kind {
  width: 142px;
  padding-left: 12px;
}
.kind .mag {
  width: 16px;
  height: 16px;
  color: #d8d8d8;
}
.kind select { padding-left: 6px; }
.ficons {
  display: flex;
  gap: 18px;
  margin: 0 23px 0 25px;
}
.toggle {
  align-items: flex-start;
  width: 14px;
  height: 28px;
  border: 1px solid #444;
  border-radius: 7px;
  background: #242424;
}
.toggle i {
  width: 12px;
  height: 12px;
  border-radius: 50%;
  background: #ccc;
}
.blend { width: 178px; margin-right: 12px; }
.blend select { padding-left: 13px; }
.lrow label {
  width: 84px;
  padding-right: 7px;
  text-align: right;
}
.lockrow {
  height: 47px;
  padding: 0 0 2px 9px;
  border: 0;
}
.lockrow .lbl { width: 57px; }
.licons {
  display: flex;
  gap: 13px;
  margin-right: 6px;
}
.licons svg { height: 18px; }
.lockrow label { width: 55px; }
.stack {
  flex: 1;
  min-height: 0;
  padding-right: 23px;
  background: #2b2b2b;
}
.stack ul { background: #242424; }
.stack li {
  display: flex;
  gap: 1px;
  height: 97px;
  padding-bottom: 1px;
}
.vis {
  width: 44px;
  background: #323232;
}
.vis svg {
  width: 19px;
  height: 17px;
}
.layer {
  display: flex;
  align-items: center;
  flex: 1;
  padding: 0 23px 0 3px;
  background: #323232;
}
.on .layer { background: #4b4b4b; }
.thumb {
  width: 90px;
  height: 90px;
  padding: 2px;
  margin-right: 12px;
  border: 1px solid transparent;
}
.thumb i {
  height: 84px;
  border: 1px solid #707070;
  background: #7e7e7e;
}
.on .thumb { border-color: #fff; }
.on .thumb i { background: repeating-conic-gradient(#666 0 25%, #333 0 50%) 0 0 / 8px 8px; }
.lk {
  margin-left: auto;
  color: #c8c8c8;
}
.layerfoot {
  display: flex;
  align-items: center;
  justify-content: flex-end;
  gap: 21px;
  height: 37px;
  padding-right: 41px;
  border-top: 1px solid #242424;
}
.layerfoot svg {
  width: 20px;
  height: 18px;
}
.layerfoot .dim { color: #777; }
</style>
